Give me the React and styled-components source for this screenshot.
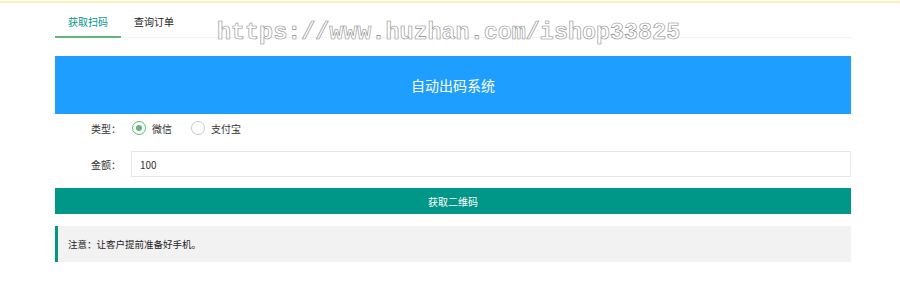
import React, { useState } from "react";
import styled, { createGlobalStyle } from "styled-components";

const Global = createGlobalStyle`
  html, body {
    margin: 0;
    padding: 0;
    background: #fff;
    font-family: "Noto Sans CJK SC", "Noto Sans", sans-serif;
    color: #333;
  }
`;

const Page = styled.div`
  position: relative;
  width: 900px;
  height: 287px;
  overflow: hidden;
`;

const TopLine = styled.div`
  height: 2px;
  margin-top: 1px;
  background: #fdf0b9;
`;

const Wrap = styled.div`
  margin: 0 49px 0 55px;
  display: flex;
  flex-direction: column;
`;

const TabBar = styled.div`
  display: flex;
  height: 32px;
  margin-top: 2px;
  border-bottom: 1px solid #f2f2f2;
`;

const Tab = styled.div`
  position: relative;
  padding: 0 13px;
  line-height: 34px;
  font-size: 10px;
  color: ${({ active }) => (active ? "#009688" : "#222")};
  cursor: pointer;
  &::after {
    content: "";
    display: ${({ active }) => (active ? "block" : "none")};
    position: absolute;
    left: 0;
    right: 0;
    bottom: -1px;
    height: 2px;
    background: #5fb878;
  }
`;

const Header = styled.div`
  margin-top: 18px;
  height: 58px;
  background: #1e9fff;
  color: #fff;
  font-size: 14px;
  display: flex;
  align-items: center;
  justify-content: center;
`;

const Row = styled.div`
  display: flex;
  align-items: center;
  height: 26px;
  margin-top: ${({ top }) => top}px;
`;

const Label = styled.div`
  width: 66px;
  padding-right: 10px;
  text-align: right;
  font-size: 10px;
  color: #333;
`;

const RadioItem = styled.label`
  display: flex;
  align-items: center;
  gap: 6px;
  margin-right: 18px;
  font-size: 10px;
  color: #333;
  cursor: pointer;
  margin-left: 1px;
`;

const Circle = styled.span`
  box-sizing: border-box;
  width: 14px;
  height: 14px;
  border-radius: 50%;
  border: 1px solid ${({ on }) => (on ? "#5fb878" : "#c9c9c9")};
  display: flex;
  align-items: center;
  justify-content: center;
  &::after {
    content: "";
    display: ${({ on }) => (on ? "block" : "none")};
    width: 6px;
    height: 6px;
    border-radius: 50%;
    background: #5fb878;
  }
`;

const Input = styled.input`
  flex: 1;
  box-sizing: border-box;
  height: 26px;
  border: 1px solid #e6e6e6;
  padding: 0 8px;
  font-size: 10px;
  font-family: "Noto Sans CJK SC", "Noto Sans", sans-serif;
  color: #333;
  outline: none;
`;

const Button = styled.button`
  margin-top: 11px;
  height: 26px;
  border: none;
  background: #009688;
  color: #fff;
  font-size: 10px;
  font-family: "Noto Sans CJK SC", "Noto Sans", sans-serif;
  cursor: pointer;
`;

const Note = styled.div`
  margin-top: 12px;
  height: 36px;
  box-sizing: border-box;
  background: #f2f2f2;
  border-left: 3px solid #009688;
  padding-left: 10px;
  display: flex;
  align-items: center;
  font-size: 9.5px;
  color: #222;
`;

const Watermark = styled.div`
  position: absolute;
  left: 217px;
  top: 17px;
  font-family: "Liberation Mono", monospace;
  font-weight: bold;
  font-size: 23.4px;
  line-height: 32px;
  color: #fff;
  -webkit-text-stroke: 0.6px #8c8c8c;
  pointer-events: none;
  white-space: nowrap;
`;

export default function App() {
  const [tab, setTab] = useState(0);
  const [pay, setPay] = useState("wx");
  const [amount, setAmount] = useState("100");
  return (
    <Page>
      <Global />
      <TopLine />
      <Wrap>
        <TabBar>
          <Tab active={tab === 0} onClick={() => setTab(0)}>获取扫码</Tab>
          <Tab active={tab === 1} onClick={() => setTab(1)}>查询订单</Tab>
        </TabBar>
        <Header>自动出码系统</Header>
        <Row top={1}>
          <Label>类型：</Label>
          <RadioItem onClick={() => setPay("wx")}>
            <Circle on={pay === "wx"} />
            微信
          </RadioItem>
          <RadioItem onClick={() => setPay("ali")}>
            <Circle on={pay === "ali"} />
            支付宝
          </RadioItem>
        </Row>
        <Row top={10}>
          <Label>金额：</Label>
          <Input value={amount} onChange={(e) => setAmount(e.target.value)} />
        </Row>
        <Button>获取二维码</Button>
        <Note>注意：让客户提前准备好手机。</Note>
      </Wrap>
      <Watermark>https://www.huzhan.com/ishop33825</Watermark>
    </Page>
  );
}
